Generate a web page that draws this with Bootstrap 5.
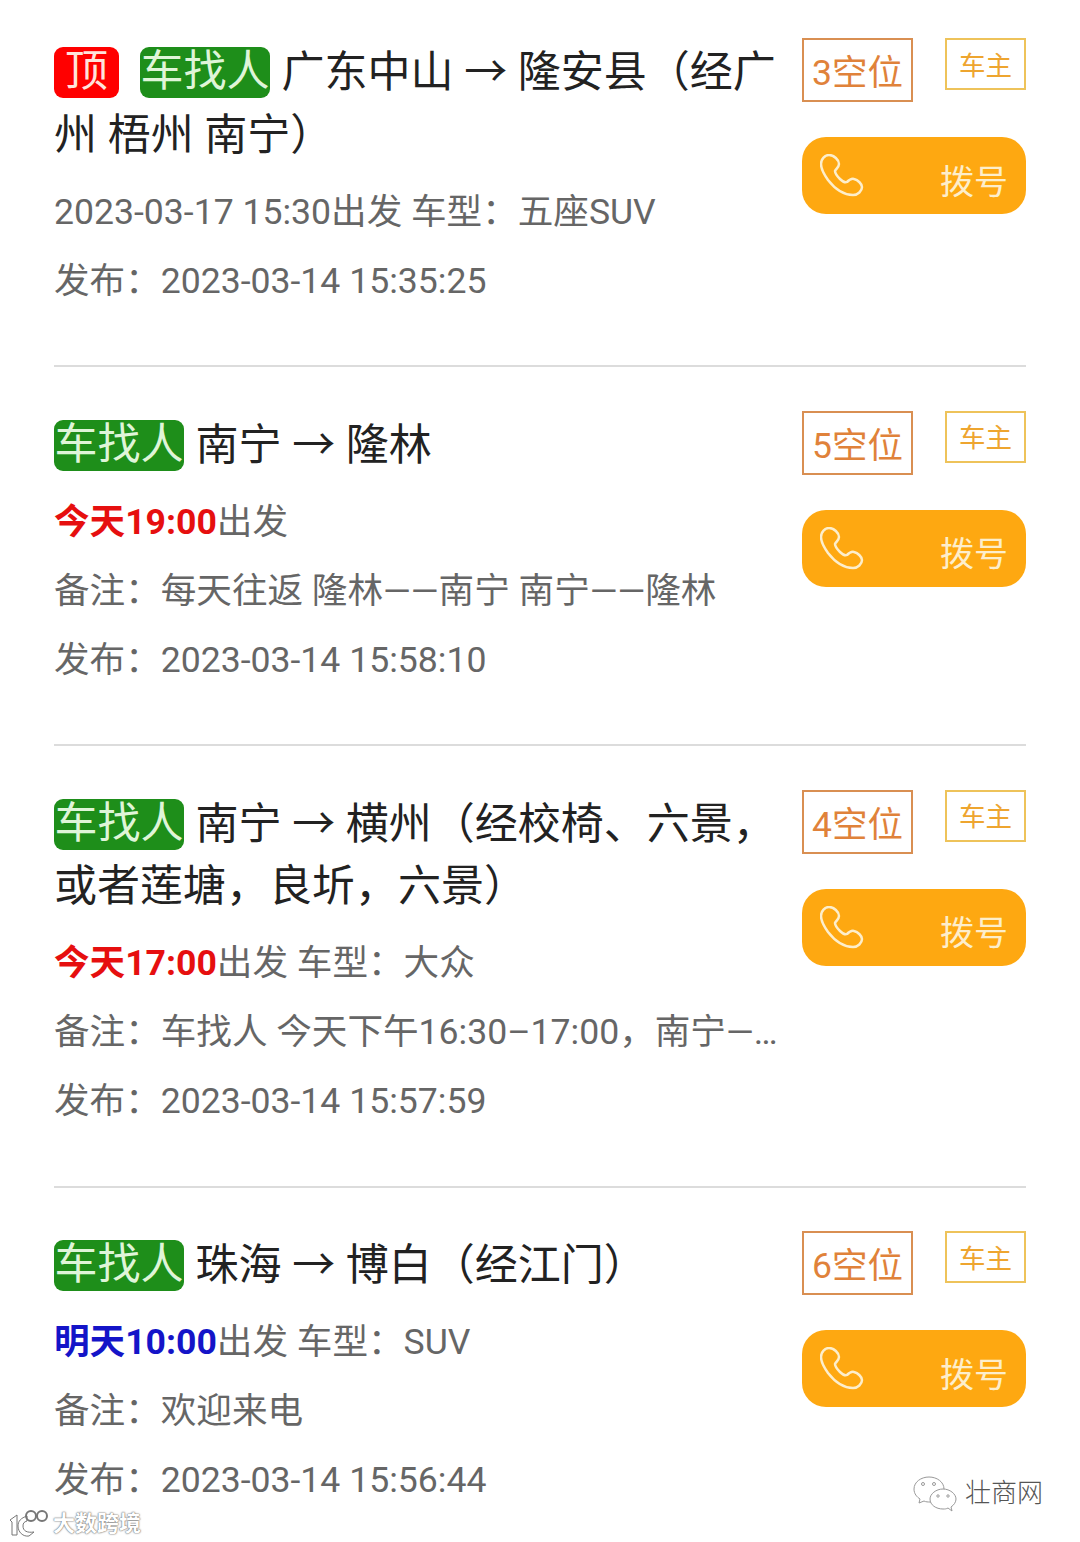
<!DOCTYPE html>
<html lang="zh-CN">
<head>
    <meta charset="UTF-8">
    <meta name="viewport" content="width=device-width, initial-scale=1.0">
    <title>拼车列表</title>
    <link href="https://cdn.jsdelivr.net/npm/bootstrap@5.3.0/dist/css/bootstrap.min.css" rel="stylesheet">
    <style>
        body {
            font-family: Roboto, "Noto Sans CJK SC", sans-serif;
            background: #fff;
            height: 1542px;
            overflow: hidden;
        }
        .trip-list { padding: 0 54px; }
        .trip-item {
            padding: 44px 0 49px;
            border-bottom: 2px solid #dcdcdc;
        }
        .trip-item:first-child { padding-top: 38px; }
        .trip-item:nth-child(3) { padding-bottom: 50px; }
        .trip-item:last-child { border-bottom: 0; padding-top: 43px; }
        .trip-info { width: 729px; padding-top: 3px; }
        .trip-side { width: 224px; }
        .trip-title {
            font-size: 43px;
            line-height: 62.5px;
            color: #222;
            font-weight: 400;
            margin: 0 0 11.5px;
        }
        .tag-fill {
            display: inline-block;
            height: 51px;
            line-height: 49px;
            border-radius: 9px;
            color: #dff5d8;
            vertical-align: 1px;
        }
        .tag-top { background: #f00; color: #ffe3dc; padding: 0 11px; margin-right: 21px; }
        .tag-car { background: #1e8e1a; margin-right: 11.5px; padding: 0 .5px; }
        .trip-line {
            font-size: 35.6px;
            line-height: 69px;
            color: #666;
            font-weight: 400;
            white-space: nowrap;
            overflow: hidden;
            text-overflow: ellipsis;
        }
        .when-today { color: #e60f0f; font-weight: 700; }
        .when-next { color: #1414c8; font-weight: 700; }
        .seat-tag {
            width: 111px;
            height: 64px;
            line-height: 64px;
            padding-top: 1px;
            font-size: 35.5px;
            font-weight: 400;
            text-align: center;
            color: #e0823a;
            border: 2px solid #d98f52;
        }
        .owner-tag {
            width: 81px;
            height: 52px;
            padding-top: 3px;
            font-size: 26.5px;
            font-weight: 400;
            color: #eea52f;
            border: 2px solid #eec35a;
        }
        .dial-btn {
            height: 77px;
            margin-top: 35px;
            padding: 0 18px 0 18px;
            border-radius: 24px;
            background: #fea811;
            color: #fdeecb;
            font-size: 34px;
            font-weight: 400;
        }
        .dial-btn span { padding-top: 13px; }
        .mark-left {
            position: absolute;
            left: 9px;
            top: 1507px;
            color: #fff;
            font-size: 22px;
            font-weight: 700;
            text-shadow: 0 0 2px #666, 0 0 1px #666;
        }
        .mark-right {
            position: absolute;
            left: 913px;
            top: 1474px;
            color: #555;
            font-size: 26px;
            font-weight: 300;
        }
    </style>
</head>
<body>

<div class="trip-list">

    <div class="trip-item d-flex justify-content-between">
        <div class="trip-info">
            <p class="trip-title"><span class="tag-fill tag-top">顶</span><span class="tag-fill tag-car">车找人</span><span>广东中山 → 隆安县（经广州 梧州 南宁）</span></p>
            <div class="trip-line">2023-03-17 15:30出发 车型：五座SUV</div>
            <div class="trip-line">发布：2023-03-14 15:35:25</div>
        </div>
        <div class="trip-side">
            <div class="d-flex justify-content-between align-items-start">
                <div class="seat-tag">3空位</div>
                <div class="owner-tag d-flex align-items-center justify-content-center">车主</div>
            </div>
            <div class="dial-btn d-flex align-items-center justify-content-between">
                <svg width="44" height="43" viewBox="0 0 44 43" fill="none" stroke="#fdeecb" stroke-width="2.5"><path d="M9 1C5 1 1 5 1 10C1 14 3 19 8 26C15 35 24 41 33 41C38 41 42 37 42 33C42 30 38 26 34 25C31 24 29 26 27 28C25 29 23 28 20 25C17 22 15 19 15 17C16 15 19 13 19 10C19 6 14 1 9 1Z"/></svg>
                <span>拨号</span>
            </div>
        </div>
    </div>

    <div class="trip-item d-flex justify-content-between">
        <div class="trip-info">
            <p class="trip-title"><span class="tag-fill tag-car">车找人</span><span>南宁 → 隆林</span></p>
            <div class="trip-line"><span class="when-today">今天19:00</span><span>出发</span></div>
            <div class="trip-line">备注：每天往返 隆林——南宁 南宁——隆林</div>
            <div class="trip-line">发布：2023-03-14 15:58:10</div>
        </div>
        <div class="trip-side">
            <div class="d-flex justify-content-between align-items-start">
                <div class="seat-tag">5空位</div>
                <div class="owner-tag d-flex align-items-center justify-content-center">车主</div>
            </div>
            <div class="dial-btn d-flex align-items-center justify-content-between">
                <svg width="44" height="43" viewBox="0 0 44 43" fill="none" stroke="#fdeecb" stroke-width="2.5"><path d="M9 1C5 1 1 5 1 10C1 14 3 19 8 26C15 35 24 41 33 41C38 41 42 37 42 33C42 30 38 26 34 25C31 24 29 26 27 28C25 29 23 28 20 25C17 22 15 19 15 17C16 15 19 13 19 10C19 6 14 1 9 1Z"/></svg>
                <span>拨号</span>
            </div>
        </div>
    </div>

    <div class="trip-item d-flex justify-content-between">
        <div class="trip-info">
            <p class="trip-title"><span class="tag-fill tag-car">车找人</span><span>南宁 → 横州（经校椅、六景，或者莲塘，良圻，六景）</span></p>
            <div class="trip-line"><span class="when-today">今天17:00</span><span>出发 车型：大众</span></div>
            <div class="trip-line">备注：车找人 今天下午16:30–17:00，南宁—隆林方向</div>
            <div class="trip-line">发布：2023-03-14 15:57:59</div>
        </div>
        <div class="trip-side">
            <div class="d-flex justify-content-between align-items-start">
                <div class="seat-tag">4空位</div>
                <div class="owner-tag d-flex align-items-center justify-content-center">车主</div>
            </div>
            <div class="dial-btn d-flex align-items-center justify-content-between">
                <svg width="44" height="43" viewBox="0 0 44 43" fill="none" stroke="#fdeecb" stroke-width="2.5"><path d="M9 1C5 1 1 5 1 10C1 14 3 19 8 26C15 35 24 41 33 41C38 41 42 37 42 33C42 30 38 26 34 25C31 24 29 26 27 28C25 29 23 28 20 25C17 22 15 19 15 17C16 15 19 13 19 10C19 6 14 1 9 1Z"/></svg>
                <span>拨号</span>
            </div>
        </div>
    </div>

    <div class="trip-item d-flex justify-content-between">
        <div class="trip-info">
            <p class="trip-title"><span class="tag-fill tag-car">车找人</span><span>珠海 → 博白（经江门）</span></p>
            <div class="trip-line"><span class="when-next">明天10:00</span><span>出发 车型：SUV</span></div>
            <div class="trip-line">备注：欢迎来电</div>
            <div class="trip-line">发布：2023-03-14 15:56:44</div>
        </div>
        <div class="trip-side">
            <div class="d-flex justify-content-between align-items-start">
                <div class="seat-tag">6空位</div>
                <div class="owner-tag d-flex align-items-center justify-content-center">车主</div>
            </div>
            <div class="dial-btn d-flex align-items-center justify-content-between">
                <svg width="44" height="43" viewBox="0 0 44 43" fill="none" stroke="#fdeecb" stroke-width="2.5"><path d="M9 1C5 1 1 5 1 10C1 14 3 19 8 26C15 35 24 41 33 41C38 41 42 37 42 33C42 30 38 26 34 25C31 24 29 26 27 28C25 29 23 28 20 25C17 22 15 19 15 17C16 15 19 13 19 10C19 6 14 1 9 1Z"/></svg>
                <span>拨号</span>
            </div>
        </div>
    </div>

</div>

<div class="mark-left d-flex align-items-center gap-1">
    <svg width="40" height="28" viewBox="0 0 40 28" fill="#fff" stroke="#777" stroke-width="1"><path d="M1 10L8 5V25H3V12Z"/><path d="M18 6C12 8 9 11 9 16C9 22 14 27 20 26L25 22C18 23 14 21 14 16C14 13 15 12 18 11Z"/><circle cx="22" cy="6" r="5" fill="none" stroke-width="2"/><circle cx="33" cy="6" r="5" fill="none" stroke-width="2"/></svg>
    <span>大数跨境</span>
</div>

<div class="mark-right d-flex align-items-center">
    <svg width="44" height="36" viewBox="0 0 44 36" fill="#fff" stroke="#999" stroke-width="1"><path d="M16 1C8 1 1 6 1 13C1 18 4 21 7 23L6 27L11 25C13 26 15 26 17 26C26 26 31 19 31 13C31 6 24 1 16 1Z"/><path d="M30 13C23 13 17 18 17 23C17 29 23 33 30 33C32 33 33 33 35 32L39 35L38 31C41 29 43 26 43 23C43 18 37 13 30 13Z"/><circle cx="10" cy="8" r="1.5"/><circle cx="21" cy="8" r="1.5"/><circle cx="25" cy="20" r="1.2"/><circle cx="35" cy="20" r="1.2"/></svg>
    <span class="ms-2">壮商网</span>
</div>

<script src="https://cdn.jsdelivr.net/npm/bootstrap@5.3.0/dist/js/bootstrap.bundle.min.js"></script>
</body>
</html>
